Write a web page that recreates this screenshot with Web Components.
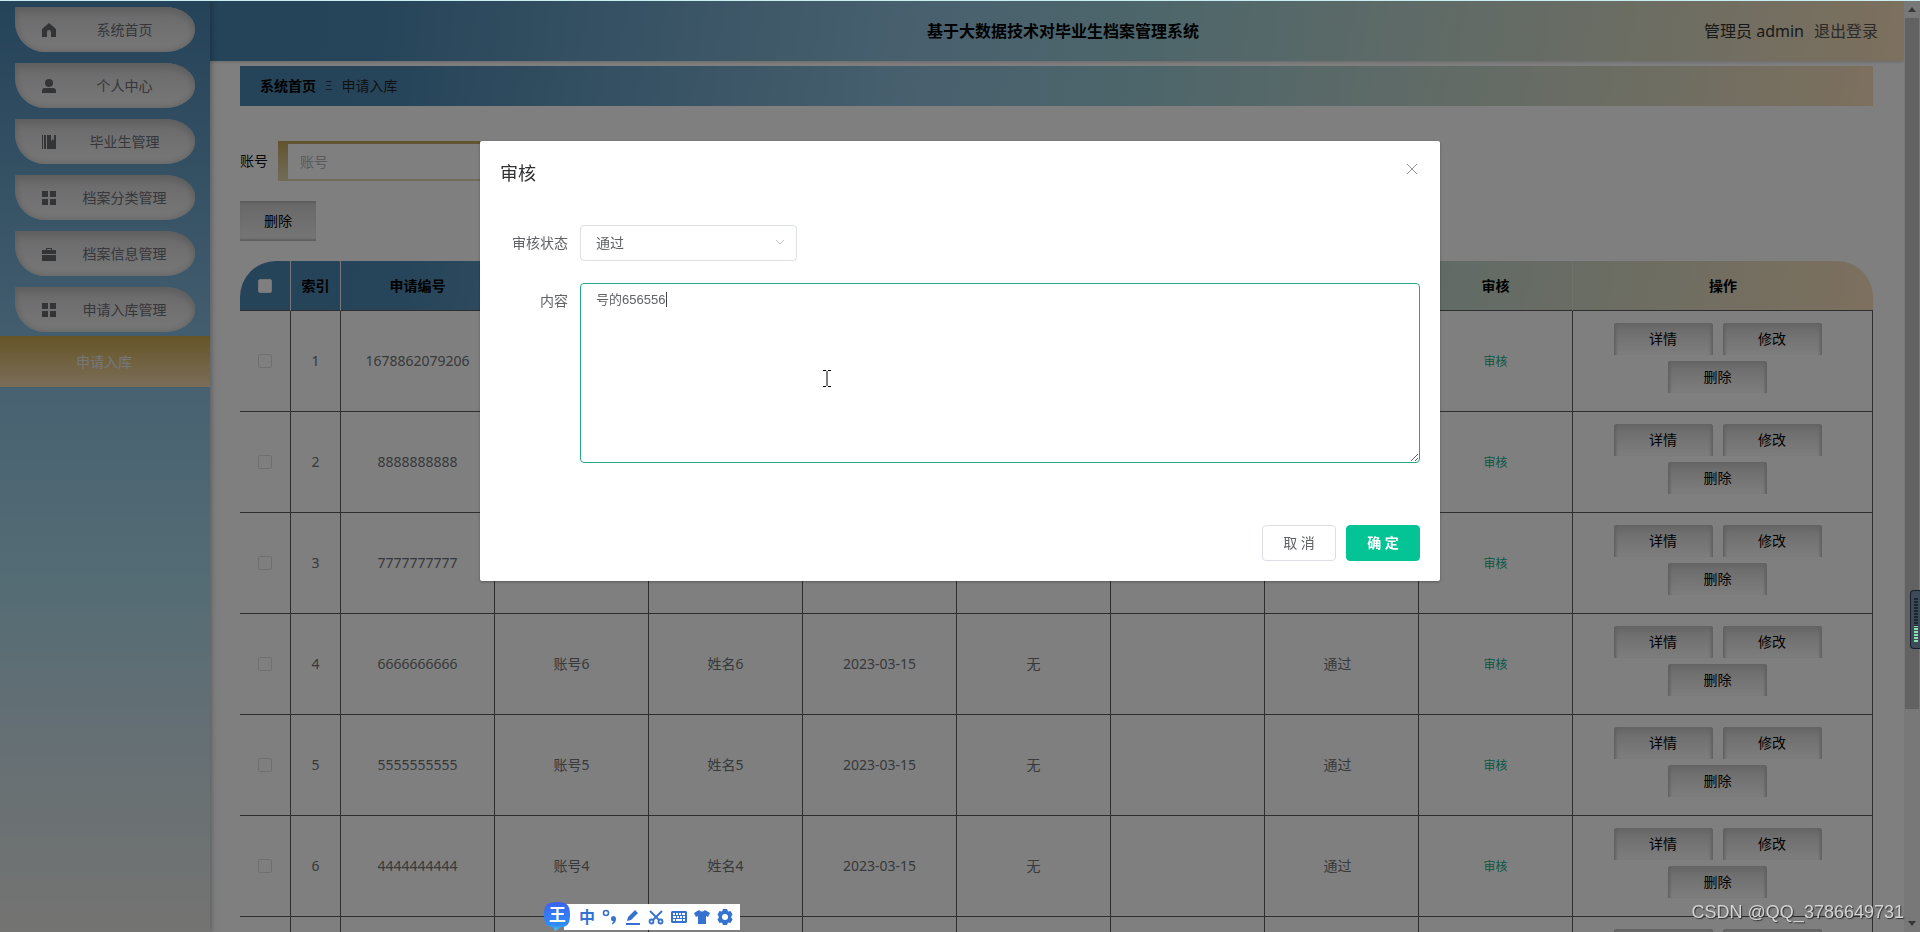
<!DOCTYPE html>
<html lang="zh-CN">
<head>
<meta charset="utf-8">
<title>基于大数据技术对毕业生档案管理系统</title>
<style>
  html, body { margin: 0; height: 100%; overflow: hidden; }
  body {
    font-family: "Noto Sans", "Noto Sans CJK SC", sans-serif;
    font-size: 14px; line-height: 20px; color: #606266; background: #fff;
    --bar: linear-gradient(100deg, #4a86b2 0%, #4e8ab4 10%, #92c2de 42%, #9accd6 55%, #c0d6ce 72%, #e0dcc4 88%, #fae0bc 100%);
  }
</style>
</head>
<body>
<archive-app></archive-app>

<script>
const define = (name, html, setup) => {
  const template = document.createElement('template');
  template.innerHTML = html;
  customElements.define(name, class extends HTMLElement {
    constructor() {
      super();
      this.attachShadow({ mode: 'open' }).append(template.content.cloneNode(true));
    }
    connectedCallback() { if (setup) setup(this, this.shadowRoot); }
  });
};

/* Sidebar entry: icon on the left, label centred in the rest */
const icons = {
  home: '<path d="M7 0 0 6v8h5V9a2 2 0 0 1 4 0v5h5V6z"/>',
  user: '<circle cx="7" cy="4" r="4"/><path d="M0 14v-2q0-3 3-3h8q3 0 3 3v2z"/>',
  book: '<path d="M0 0h1v14H0zM2 0h2v14H2zM5 0h4v6l2-2 1 2V0h2v14H5z"/>',
  grid: '<path d="M0 0h6v6H0zM8 0h6v6H8zM0 8h6v6H0zM8 8h6v6H8z"/>',
  bag: '<path d="M4 3V1h6v2h4v4H0V3zM5 3h4V2H5zM0 8h14v6H0z" fill-rule="evenodd"/>'
};
define('side-item', `
  <style>
    :host { display: block; }
    a {
      display: flex; align-items: center; height: 45px; box-sizing: border-box;
      padding: 0 2px 0 27px; color: #6c6e74; text-decoration: none;
      border-radius: 2px 30px 30px 30px / 2px 22px 22px 30px;
      background: linear-gradient(#d4d3d6, #f0f0f2);
      box-shadow: inset 0 8px 8px -4px #bcbcbe, inset 0 0 6px 1px #c4c4c4;
    }
    svg { width: 14px; height: 14px; fill: #66686c; }
    span { flex: 1; text-align: center; }
  </style>
  <a href="#"><svg viewBox="0 0 14 14" aria-hidden="true"></svg><span><slot></slot></span></a>`,
  (el, root) => { root.querySelector('svg').innerHTML = icons[el.getAttribute('icon')]; });

define('app-sidebar', `
  <style>
    :host {
      display: block; width: 210px; flex: none; position: relative; z-index: 1;
      background: linear-gradient(#4a86b2 0, #90c4e4 42%, #a8d8e8 62%, #cce0e8 80%, #e8e8e4 100%);
      box-shadow: 1px 0 6px rgba(0, 21, 41, .35);
    }
    nav { display: flex; flex-direction: column; gap: 11px; padding: 6px 15px 4px; }
    .sub {
      display: block; height: 51px; line-height: 51px; padding-right: 2px; text-align: center;
      color: #eee; text-decoration: none; background: linear-gradient(#ccaa4e, #f6dcb2);
    }
  </style>
  <nav>
    <side-item icon="home">系统首页</side-item>
    <side-item icon="user">个人中心</side-item>
    <side-item icon="book">毕业生管理</side-item>
    <side-item icon="grid">档案分类管理</side-item>
    <side-item icon="bag">档案信息管理</side-item>
    <side-item icon="grid">申请入库管理</side-item>
  </nav>
  <a class="sub" href="#">申请入库</a>`);

define('app-header', `
  <style>
    :host {
      display: grid; grid-template-columns: 1fr auto 1fr; align-items: center;
      height: 60px; padding: 0 26px 0 38px; background: var(--bar);
      font-size: 16px; line-height: 24px; box-shadow: 0 1px 3px rgba(0, 21, 41, .2);
    }
    h1 { grid-column: 2; margin: 0; font-size: 16px; font-weight: 700; color: #000; }
    .user { display: flex; justify-content: flex-end; gap: 10px; color: #333; }
    a { color: #555; text-decoration: none; }
  </style>
  <h1>基于大数据技术对毕业生档案管理系统</h1>
  <div class="user"><span>管理员 admin</span><a href="#">退出登录</a></div>`);

define('page-crumbs', `
  <style>
    :host { display: flex; align-items: center; gap: 9px; height: 40px; padding: 0 20px; background: var(--bar); color: #222; }
    a { color: #000; font-weight: 700; text-decoration: none; }
    i { font-style: normal; font-size: 12px; color: #334; }
  </style>
  <a href="#">系统首页</a><i>Ξ</i><span>申请入库</span>`);

define('filter-form', `
  <style>
    :host { display: block; }
    form { display: flex; align-items: center; gap: 10px; color: #111; }
    input {
      box-sizing: border-box; width: 220px; height: 40px; padding: 0 12px; font: inherit;
      border-style: solid; border-width: 3px 10px 2px 10px;
      border-image: linear-gradient(#c4a860, #e4d8b0) 3 10 2; background: #fff; outline: 0;
    }
    input::placeholder { color: #b4b6bc; }
  </style>
  <form><label for="account">账号</label><input id="account" placeholder="账号"></form>`);

define('bulk-button', `
  <style>
    :host { display: block; }
    button {
      display: block; width: 76px; height: 40px; padding: 0; border: 0; font: inherit; color: #000;
      background: linear-gradient(#d0d0d0, #ececec);
      box-shadow: inset 0 3px 2px -1px #b8b8b8, inset 0 -3px 2px -1px #bcbcbc;
    }
  </style>
  <button type="button"><slot></slot></button>`);

define('row-button', `
  <style>
    :host { display: inline-block; margin: 0 10px 6px 0; vertical-align: top; }
    button {
      display: block; width: 99px; height: 32px; padding: 0; border: 0; font: inherit; color: #000;
      border-radius: 3px 3px 0 0;
      background: linear-gradient(#d4d4d4, #fcfcfc);
      box-shadow: inset 4px 0 3px -2px #c0c0c0, inset -4px 0 3px -2px #c0c0c0, inset 0 6px 6px -3px #c8c8c8;
    }
  </style>
  <button type="button"><slot></slot></button>`);

const rows = [
  ['1678862079206', '', '', '', '', '', ''],
  ['8888888888', '', '', '', '', '', ''],
  ['7777777777', '', '', '', '', '', ''],
  ['6666666666', '账号6', '姓名6', '2023-03-15', '无', '', '通过'],
  ['5555555555', '账号5', '姓名5', '2023-03-15', '无', '', '通过'],
  ['4444444444', '账号4', '姓名4', '2023-03-15', '无', '', '通过'],
  ['', '', '', '', '', '', '']
];
define('records-table', `
  <style>
    :host { display: block; }
    table {
      width: 100%; table-layout: fixed; border-collapse: separate; border-spacing: 0; overflow: hidden;
      background: var(--bar) no-repeat 0 0 / 100% 50px; border-radius: 36px 36px 0 0; color: #707276;
    }
    .check { width: 51px; }
    .index { width: 50px; }
    .ops { width: 300px; }
    th { height: 49px; padding: 0; color: #000; border-right: 1px solid rgba(255, 255, 255, .9); border-bottom: 1px solid #5c5c5c; }
    th:nth-child(n+9) { border-right-color: rgba(255, 255, 255, .25); }
    th:last-child { border-right: 0; }
    td { height: 100px; padding: 0; text-align: center; border-right: 1px solid #5c5c5c; border-bottom: 1px solid #5c5c5c; }
    td:nth-child(9) { padding-right: 8px; }
    td:last-child { padding-top: 12px; height: 88px; vertical-align: top; }
    input {
      appearance: none; display: block; width: 14px; height: 14px; margin: 0 auto;
      border: 1px solid #e8eaee; border-radius: 2px; background: #fff;
    }
    td input { border-color: #dcdee2; }
    .link { border: 0; padding: 0; background: none; font: inherit; font-size: 12px; color: #10b088; }
  </style>
  <table>
    <colgroup><col class="check"><col class="index"><col span="8"><col class="ops"></colgroup>
    <thead><tr>
      <th><input type="checkbox" aria-label="全选"></th><th>索引</th><th>申请编号</th>
      <th></th><th></th><th></th><th></th><th></th><th></th><th>审核</th><th>操作</th>
    </tr></thead>
    <tbody></tbody>
  </table>`,
  (el, root) => {
    root.querySelector('tbody').innerHTML = rows.map((cells, i) => `<tr>
      <td><input type="checkbox" aria-label="选择"></td>
      <td>${i < 6 ? i + 1 : ''}</td>
      ${cells.map(c => `<td>${c}</td>`).join('')}
      <td>${i < 6 ? '<button class="link" type="button">审核</button>' : ''}</td>
      <td><row-button>${i < 6 ? '详情' : ''}</row-button><row-button>${i < 6 ? '修改' : ''}</row-button><row-button>${i < 6 ? '删除' : ''}</row-button></td>
    </tr>`).join('');
  });

define('scroll-track', `
  <style>
    :host { display: grid; grid-template-rows: 17px 1fr 17px; flex: none; width: 16px; background: #f0f0f0; justify-items: center; align-items: center; }
    .thumb { align-self: start; width: 14px; height: 77%; background: #c4c4c4; }
    svg { width: 8px; height: 5px; fill: #707070; }
  </style>
  <svg viewBox="0 0 8 5"><path d="M0 5 4 0l4 5z"/></svg>
  <div class="thumb"></div>
  <svg viewBox="0 0 8 5"><path d="M0 0h8L4 5z"/></svg>`);

define('audit-dialog', `
  <style>
    :host { position: fixed; inset: 0; z-index: 5; background: rgba(0, 0, 0, .5); padding-top: 141px; }
    section { width: 50%; margin: 0 auto; background: #fff; border-radius: 2px; box-shadow: 0 1px 3px rgba(0, 0, 0, .3); }
    header { display: flex; justify-content: space-between; padding: 20px 20px 10px; }
    h2 { margin: 0; font-size: 18px; line-height: 24px; font-weight: 400; color: #303133; }
    .close { width: 16px; height: 16px; padding: 3px; border: 0; background: none; }
    .close svg { display: block; width: 10px; height: 10px; fill: none; stroke: #909399; }
    form { display: grid; grid-template-columns: 68px 1fr; gap: 22px 12px; padding: 30px 20px 52px; }
    label { text-align: right; line-height: 36px; }
    .pick { position: relative; width: 217px; }
    select {
      appearance: none; display: block; width: 100%; height: 36px; padding: 0 15px; font: inherit; color: inherit;
      border: 1px solid #dcdfe6; border-radius: 4px; background: #fff;
    }
    .pick svg { position: absolute; right: 12px; top: 15px; width: 10px; height: 6px; fill: none; stroke: #c0c4cc; }
    .text { position: relative; }
    textarea {
      display: block; box-sizing: border-box; width: 100%; height: 180px; padding: 5px 15px; margin: 0; resize: vertical; outline: 0;
      border: 1px solid #26a68c; border-radius: 4px; background: #fff; color: #606266;
      font-family: "Liberation Sans", "Noto Sans CJK SC", sans-serif; font-size: 13px; line-height: 21px;
    }
    .caret { position: absolute; left: 86px; top: 9px; width: 1px; height: 15px; background: #444; }
    .pointer { position: absolute; left: 243px; top: 87px; width: 8px; height: 17px; fill: none; stroke: #000; }
    footer { display: flex; justify-content: flex-end; gap: 10px; padding: 10px 20px 20px; }
    footer button { width: 74px; height: 36px; padding: 0; font: inherit; border: 1px solid #dcdfe6; border-radius: 4px; background: #fff; color: #606266; }
    footer .ok { border-color: #04c394; background: #04c394; color: #fff; font-weight: 700; }
  </style>
  <section role="dialog" aria-labelledby="title">
    <header>
      <h2 id="title">审核</h2>
      <button class="close" type="button" aria-label="关闭"><svg viewBox="0 0 10 10"><path d="M0 0l10 10M10 0 0 10"/></svg></button>
    </header>
    <form>
      <label for="state">审核状态</label>
      <div class="pick">
        <select id="state"><option>通过</option></select>
        <svg viewBox="0 0 10 6"><path d="M1 0l4 4 4-4"/></svg>
      </div>
      <label for="note">内容</label>
      <div class="text">
        <textarea id="note">号的656556</textarea>
        <div class="caret"></div>
        <svg class="pointer" viewBox="0 0 8 17"><path d="M0 .5h3M5 .5h3M0 16.5h3M5 16.5h3M4 1v15"/></svg>
      </div>
    </form>
    <footer>
      <button type="button">取 消</button>
      <button class="ok" type="button">确 定</button>
    </footer>
  </section>`);

/* Floating input-method toolbar */
define('ime-bar', `
  <style>
    :host { position: fixed; left: 544px; bottom: 1px; z-index: 6; display: flex; align-items: center; color: #3572d0; }
    .logo { position: relative; width: 27px; height: 29px; z-index: 1; }
    .logo svg { display: block; width: 27px; height: 29px; }
    .logo b { position: absolute; inset: 0; text-align: center; font-size: 17px; line-height: 25px; color: #fff; }
    .tools { display: flex; align-items: center; gap: 7px; height: 26px; padding: 0 7px 0 15px; margin-left: -7px; background: #fff; }
    .tools b { width: 16px; text-align: center; font-size: 16px; line-height: 24px; }
    .tools svg { width: 16px; height: 16px; fill: currentColor; }
  </style>
  <div class="logo">
    <svg viewBox="0 0 27 29">
      <defs><linearGradient id="g" x2="0" y2="1"><stop stop-color="#3c62f0"/><stop offset=".8" stop-color="#2f8cf6"/><stop offset="1" stop-color="#48d4fa"/></linearGradient></defs>
      <path fill="url(#g)" d="M13 0c10 0 13 3 13 13 0 9-3 12-9 12l-6 4-2-4C3 25 0 22 0 13 0 3 3 0 13 0z"/>
    </svg><b>王</b>
  </div>
  <div class="tools">
    <b>中</b>
    <svg viewBox="0 0 16 16"><circle cx="4" cy="4" r="2.5" fill="none" stroke="currentColor" stroke-width="1.6"/><path d="M11 7a3 3 0 0 1 3 3c0 3-2 5-4 5.500V14c1-.5 1.500-1 1.500-1.500A2.800 2.800 0 0 1 11 7z"/></svg>
    <svg viewBox="0 0 16 16"><path d="M2 12l1-4 7-7 3 3-7 7zM1 14h14v2H1z"/></svg>
    <svg viewBox="0 0 16 16" style="fill:none;stroke:currentColor;stroke-width:1.800"><circle cx="3.500" cy="12.500" r="2"/><circle cx="12.500" cy="12.500" r="2"/><path d="M2 2l9 9M14 2l-9 9"/></svg>
    <svg viewBox="0 0 16 16"><path fill-rule="evenodd" d="M1 2h14l1 1v10l-1 1H1l-1-1V3zM2 4v2h2V4zm3 0v2h2V4zm3 0v2h2V4zm3 0v2h3V4zM2 7v2h3V7zm4 0v2h2V7zm3 0v2h2V7zm3 0v2h2V7zM2 10v2h2v-2zm3 0v2h6v-2zm7 0v2h2v-2z"/></svg>
    <svg viewBox="0 0 16 16"><path d="M5 1q3 3 6 0l5 3-2 4-2-1v8H4V7L2 8 0 4z"/></svg>
    <svg viewBox="0 0 16 16"><path fill-rule="evenodd" d="M6 0h4l1 2.500 2.500-.5 2 3.500L14 8l1.500 2.500-2 3.500-2.500-.5L10 16H6l-1-2.500-2.500.5-2-3.500L2 8 .5 5.500l2-3.500 2.500.5zM8 5a3 3 0 1 0 0 6 3 3 0 0 0 0-6z"/></svg>
  </div>`);

define('level-meter', `
  <style>
    :host { position: fixed; right: 0; top: 590px; z-index: 6; box-sizing: border-box; width: 10px; height: 59px; padding: 7px 2px 6px 3px; background: #3c4a5a; border: 1px solid #161e2a; border-right: 0; border-radius: 4px 0 0 4px; }
    div { height: 100%; background: repeating-linear-gradient(transparent 0 2px, #3c4a5a 2px 3px), linear-gradient(#1c242e 0 64%, #8ce0b4 64%); }
  </style>
  <div></div>`);

define('water-mark', `
  <style>
    :host { position: fixed; right: 16px; bottom: 9px; z-index: 6; font: 18px/22px "Liberation Sans", sans-serif; color: #d4d4d4; text-shadow: 1px 1px 1px #333; }
  </style><slot></slot>`);

define('archive-app', `
  <style>
    :host { display: flex; box-sizing: border-box; height: 100vh; overflow: hidden; padding-top: 1px; }
    .line { position: fixed; inset: 0 0 auto; height: 1px; background: #c8eef2; z-index: 7; }
    .main { flex: 1; min-width: 0; overflow: hidden; }
    .content { padding: 5px 31px 0 30px; }
    filter-form { margin-top: 35px; }
    bulk-button { margin-top: 20px; }
    records-table { margin-top: 20px; }
  </style>
  <div class="line"></div>
  <app-sidebar></app-sidebar>
  <div class="main">
    <app-header></app-header>
    <div class="content">
      <page-crumbs></page-crumbs>
      <filter-form></filter-form>
      <bulk-button>删除</bulk-button>
      <records-table></records-table>
    </div>
  </div>
  <scroll-track></scroll-track>
  <audit-dialog></audit-dialog>
  <ime-bar></ime-bar>
  <level-meter></level-meter>
  <water-mark>CSDN @QQ_3786649731</water-mark>`);
</script>
</body>
</html>
